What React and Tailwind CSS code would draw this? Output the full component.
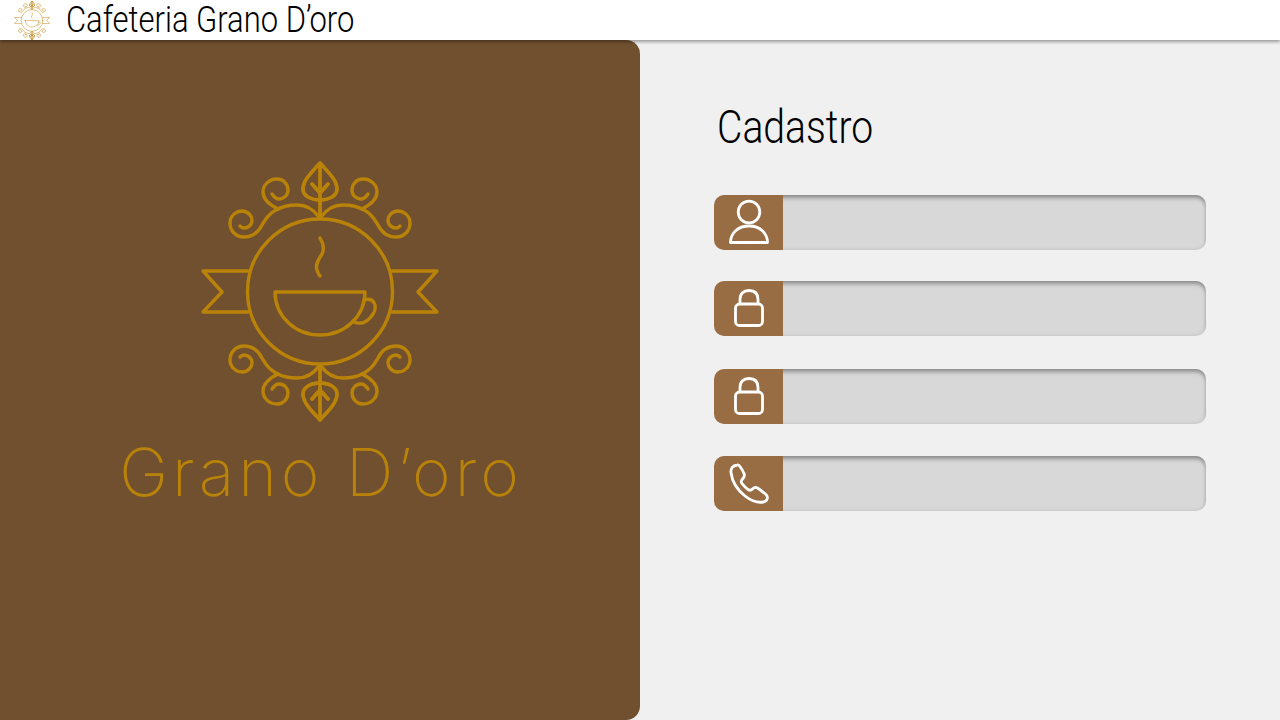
const Corner = () => (
  <>
    <path d="M320 163C312 172 303 180 303 189C303 196 311 200 320 200C329 200 337 196 337 189C337 180 328 172 320 163ZM320 163V218M312 184L320 193L328 184" />
    <path d="M319 217C312 207 304 205 297 205C288 205 281 207 276 210C268 214 265 220 262 225C258 233 252 237 244 237C236 237 230 231 230 223C230 216 236 211 242 211C248 211 252 216 252 220C252 225 248 228 244 228C242 228 241 227 240 226" />
    <path d="M278 209C270 205 263 200 263 192C263 185 269 179 277 179C284 179 288 185 288 190C288 195 284 199 279 199C276 199 274 197 272 194" />
  </>
);

const Half = () => (
  <>
    <Corner />
    <g transform="translate(640 0) scale(-1 1)">
      <Corner />
    </g>
  </>
);

const Symbol = ({ className, sw }) => (
  <svg viewBox="200 161 240 261" className={className} fill="none" stroke="currentColor" strokeWidth={sw} strokeLinecap="round" strokeLinejoin="round">
    <Half />
    <g transform="translate(0 583)">
      <g transform="scale(1 -1)">
        <Half />
      </g>
    </g>
    <circle cx="320" cy="291.5" r="72.5" />
    <path d="M248 271H203L222 292L203 312H248M392 271H437L418 292L437 312H392" />
    <path d="M275 292H365C365 316 345 335 320 335C295 335 275 316 275 292Z" />
    <path d="M364 300C374 297 378 306 373 314C368 322 361 325 354 322" />
    <path d="M320 238C323 243 325 248 322 254C318 260 315 265 317 270C318 273 319 275 320 276" />
  </svg>
);

const UserIcon = () => (
  <svg viewBox="0 0 69 55" className="w-[69px] h-[55px]" fill="none" stroke="white" strokeWidth="2.8" strokeLinejoin="round">
    <circle cx="35" cy="17" r="10.800" />
    <path d="M16.500 47.500C16.500 38 24 31 35 31C46 31 53.500 38 53.500 47.500Z" />
  </svg>
);

const LockIcon = () => (
  <svg viewBox="0 0 69 55" className="w-[69px] h-[55px]" fill="none" stroke="white" strokeWidth="2.8" strokeLinejoin="round">
    <rect x="21.500" y="23" width="27" height="21.500" rx="4" />
    <path d="M26 23V18.500C26 12.500 29.500 9.500 35 9.500C40.500 9.500 44 12.500 44 18.500V23" />
  </svg>
);

const PhoneIcon = () => (
  <svg viewBox="0 0 69 55" className="w-[69px] h-[55px]" fill="none" stroke="white" strokeWidth="2.8" strokeLinejoin="round" strokeLinecap="round">
    <path d="M23 9C19 9.500 16.500 12.500 17 16.500C18 25 23.500 34 31 40C38 45.500 44.500 46.800 49.500 46C53.500 45.300 54.500 41 52 38.500C49.500 36.500 46.500 34 43.500 32C41.500 30.800 40 31.500 38.500 33C37 34.500 35.500 34.500 34 33.500C32 32 29.500 29.500 28 27.500C27 26 27 24.500 28.500 23C30.500 21 31 19.500 30 17.500C29 15 27.500 12.500 26 10.500C25.300 9.500 24.200 8.800 23 9Z" />
  </svg>
);

const Field = ({ icon, className }) => (
  <div className={`flex h-[55px] w-[492px] ${className}`}>
    <div className="relative z-10 w-[69px] h-[55px] shrink-0 bg-[#996d43] rounded-l-[10px]">{icon}</div>
    <div className="flex-1 -ml-3 bg-[#d8d8d8] rounded-r-[10px] shadow-[inset_0_4px_4px_-1px_rgba(0,0,0,0.32),inset_0_0_4px_rgba(0,0,0,0.12)]" />
  </div>
);

export default function App() {
  return (
    <div className="w-[1280px] h-[720px] overflow-hidden flex flex-col bg-[#f0f0f0] font-['Roboto',sans-serif]">
      <header className="relative z-10 h-10 shrink-0 bg-white flex items-center pl-[14px] shadow-[0_2px_3px_rgba(0,0,0,0.35)]">
        <Symbol className="w-[36px] h-[39px] text-[#c08a1c]" sw={3.5} />
        <span className="ml-[16px] text-[36px] font-light leading-10 text-black whitespace-nowrap origin-left scale-x-[0.86]">Cafeteria Grano D’oro</span>
      </header>
      <main className="flex flex-1">
        <section className="w-[640px] bg-[#71502f] rounded-r-[14px] flex flex-col items-center pt-[121px] text-[#b98208]">
          <Symbol className="w-[240px] h-[261px]" sw={3.4} />
          <div className="mt-[10px] ml-[2px] font-['Inter',sans-serif] font-[250] text-[66px] leading-[80px] tracking-[4px] whitespace-nowrap">Grano D’oro</div>
        </section>
        <section className="flex-1 pl-[74px] pt-[55px]">
          <h1 className="ml-[3px] h-[64px] text-[46px] font-light leading-[64px] text-black origin-left scale-x-[0.85]">Cadastro</h1>
          <Field icon={<UserIcon />} className="mt-[36px]" />
          <Field icon={<LockIcon />} className="mt-[31px]" />
          <Field icon={<LockIcon />} className="mt-[33px]" />
          <Field icon={<PhoneIcon />} className="mt-[32px]" />
        </section>
      </main>
    </div>
  );
}
